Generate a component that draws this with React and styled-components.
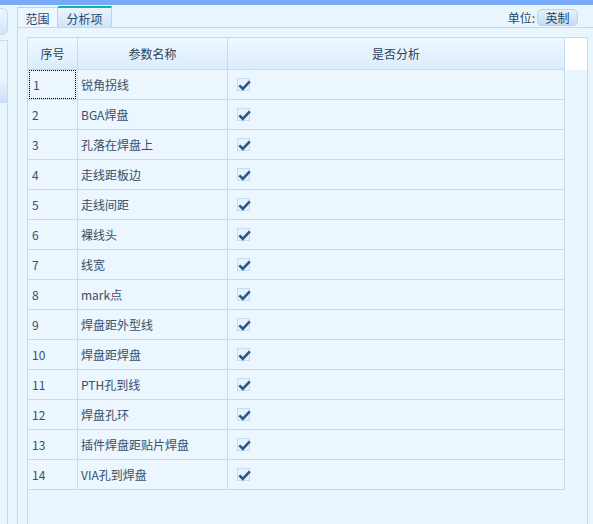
import React from "react";
import styled, { createGlobalStyle } from "styled-components";

const Global = createGlobalStyle`
  html, body { margin: 0; padding: 0; background: #eaf6fe; }
  body { font-family: "Noto Sans CJK SC", "Noto Sans", sans-serif; font-size: 12px; }
  * { box-sizing: border-box; }
`;

const Page = styled.div`
  width: 593px;
  height: 524px;
  display: flex;
  flex-direction: column;
  background: #eaf6fe;
  overflow: hidden;
`;

const TopBand = styled.div`
  height: 5px;
  flex: none;
  background: #79aaf9;
`;

const Body = styled.div`
  flex: 1;
  display: flex;
  min-height: 0;
`;

const LeftPane = styled.div`
  width: 8px;
  flex: none;
  display: flex;
  flex-direction: column;
`;

const LeftButton = styled.div`
  margin-top: 3px;
  height: 27px;
  width: 8px;
  border: 1px solid #c3daef;
  border-left: none;
  border-radius: 0 6px 6px 0;
  background: linear-gradient(#ecf6fe, #d2e6f9);
`;

const LeftList = styled.div`
  margin-top: 5px;
  flex: 1;
  border-top: 1px solid #c3daef;
  border-right: 1px solid #c3daef;
  padding-top: 42px;
`;

const LeftSelected = styled.div`
  height: 20px;
  background: linear-gradient(#e4f0fc, #c8def6);
`;

const Gap = styled.div`
  width: 9px;
  flex: none;
`;

const MainPanel = styled.div`
  flex: 1;
  display: flex;
  flex-direction: column;
  min-width: 0;
`;

const TabBar = styled.div`
  height: 22px;
  flex: none;
  display: flex;
  align-items: flex-end;
`;

const Tab = styled.div`
  height: ${(p) => (p.$active ? "21px" : "20px")};
  width: ${(p) => p.$w}px;
  display: flex;
  align-items: center;
  justify-content: center;
  color: #1f4a6e;
  font-size: 12px;
  border-right: 1px solid #b9d3ea;
  border-left: ${(p) => (p.$first ? "1px solid #b9d3ea" : "none")};
  border-top: ${(p) => (p.$active ? "2px solid #14b3a0" : "1px solid #b9d3ea")};
  background: ${(p) =>
    p.$active ? "linear-gradient(#eaf5fe, #cfe4f7)" : "#eef7ff"};
  padding-top: 1px;
`;

const TabSpacer = styled.div`
  flex: 1;
`;

const UnitBox = styled.div`
  display: flex;
  align-items: center;
  gap: 2px;
  margin-right: 15px;
  margin-bottom: 1px;
  color: #24496b;
`;

const UnitButton = styled.div`
  width: 41px;
  height: 17px;
  border: 1px solid #b7d2ec;
  border-radius: 5px;
  background: linear-gradient(#e6f2fd, #c4dcf4);
  display: flex;
  align-items: center;
  justify-content: center;
  color: #1f4566;
`;

const Content = styled.div`
  flex: 1;
  border-top: 1px solid #c3daef;
  border-left: 1px solid #c3daef;
  padding: 9px 5px 0 9px;
  display: flex;
  min-height: 0;
`;

const GridBox = styled.div`
  width: 561px;
  flex: none;
  border: 1px solid #c3daef;
  border-bottom: none;
  display: flex;
  flex-direction: column;
`;

const HeaderRow = styled.div`
  display: grid;
  grid-template-columns: 50px 150px 337px 22px;
  height: 32px;
`;

const HeaderCell = styled.div`
  display: flex;
  align-items: center;
  justify-content: center;
  color: #2c3f54;
  border-right: 1px solid #c3daef;
  border-bottom: 1px solid #c3daef;
  background: linear-gradient(#f1f8ff, #d9ecfc);
`;

const ScrollHead = styled.div`
  background: #ffffff;
`;

const Rows = styled.div`
  width: 537px;
`;

const Row = styled.div`
  display: grid;
  grid-template-columns: 50px 150px 337px;
  height: 30px;
  border-bottom: 1px solid #c3daef;
  background: #ebf6fe;
`;

const Cell = styled.div`
  display: flex;
  align-items: center;
  padding-left: ${(p) => p.$pl}px;
  border-right: 1px solid #c3daef;
  color: #3a4f67;
  white-space: nowrap;
  overflow: hidden;
`;

const FocusRing = styled.div`
  display: flex;
  align-items: center;
  width: 100%;
  height: 100%;
  margin: 0 1px;
  padding-left: 3px;
  border: 1px dotted #000;
`;

const CheckBox = styled.div`
  position: relative;
  width: 13px;
  height: 13px;
  margin-top: -1px;
  border: 1px solid #c6dcf0;
  background: #e6f2fd;
`;

const CheckMark = styled.svg`
  position: absolute;
  left: -1px;
  top: -1px;
  width: 15px;
  height: 15px;
  overflow: visible;
`;

const items = [
  "锐角拐线",
  "BGA焊盘",
  "孔落在焊盘上",
  "走线距板边",
  "走线间距",
  "裸线头",
  "线宽",
  "mark点",
  "焊盘距外型线",
  "焊盘距焊盘",
  "PTH孔到线",
  "焊盘孔环",
  "插件焊盘距贴片焊盘",
  "VIA孔到焊盘",
];

function Check() {
  return (
    <CheckBox>
      <CheckMark viewBox="0 0 15 15">
        <path
          d="M2.3 7.4 L5.8 10.8 L12.8 3.4"
          fill="none"
          stroke="#2c5a86"
          strokeWidth="2.6"
          strokeLinejoin="miter"
          strokeLinecap="butt"
        />
      </CheckMark>
    </CheckBox>
  );
}

export default function App() {
  return (
    <Page>
      <Global />
      <TopBand />
      <Body>
        <LeftPane>
          <LeftButton />
          <LeftList>
            <LeftSelected />
          </LeftList>
        </LeftPane>
        <Gap />
        <MainPanel>
          <TabBar>
            <Tab $first $w={41}>范围</Tab>
            <Tab $active $w={54}>分析项</Tab>
            <TabSpacer />
            <UnitBox>
              <span>单位:</span>
              <UnitButton>英制</UnitButton>
            </UnitBox>
          </TabBar>
          <Content>
            <GridBox>
              <HeaderRow>
                <HeaderCell>序号</HeaderCell>
                <HeaderCell>参数名称</HeaderCell>
                <HeaderCell>是否分析</HeaderCell>
                <ScrollHead />
              </HeaderRow>
              <Rows>
                {items.map((name, i) => (
                  <Row key={name}>
                    <Cell $pl={i === 0 ? 0 : 4}>
                      {i === 0 ? <FocusRing>{i + 1}</FocusRing> : i + 1}
                    </Cell>
                    <Cell $pl={3}>{name}</Cell>
                    <Cell $pl={9}>
                      <Check />
                    </Cell>
                  </Row>
                ))}
              </Rows>
            </GridBox>
          </Content>
        </MainPanel>
      </Body>
    </Page>
  );
}
